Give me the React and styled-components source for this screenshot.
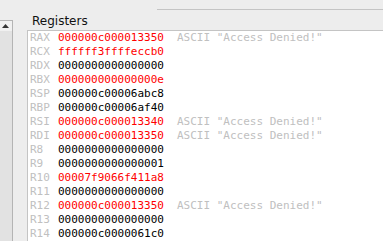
import React from "react";
import styled, { createGlobalStyle } from "styled-components";

const Global = createGlobalStyle`
  html, body { margin: 0; padding: 0; background: #ededed; }
  body { width: 383px; height: 241px; overflow: hidden; }
`;

const Window = styled.div`
  display: flex;
  flex-direction: row;
  width: 383px;
  height: 241px;
  overflow: hidden;
  background: #ededed;
`;

const ScrollCol = styled.div`
  width: 13px;
  padding-top: 20px;
  box-sizing: border-box;
  display: flex;
  flex-direction: column;
  flex: none;
`;

const Scrollbar = styled.div`
  flex: 1;
  display: flex;
  flex-direction: column;
  border-top: 1px solid #b4b4b4;
  border-right: 1px solid #b4b4b4;
`;

const ArrowButton = styled.div`
  height: 10px;
  background: #f0f0f0;
  display: flex;
  align-items: center;
  justify-content: center;
  padding-right: 1px;
`;

const Track = styled.div`
  flex: 1;
  background: #e2e2e2;
`;

const Main = styled.div`
  flex: 1;
  margin-left: 14px;
  display: flex;
  flex-direction: column;
  min-width: 0;
`;

const TopRule = styled.div`
  height: 9px;
  margin-left: ${(p) => p.$start}px;
  border-bottom: 1px solid #c4c4c4;
`;

const Title = styled.div`
  font-family: "DejaVu Sans", sans-serif;
  font-size: 12px;
  line-height: 14px;
  color: #111;
  padding: 4px 0 2px 5px;
`;

const Panel = styled.div`
  flex: 1;
  background: #ffffff;
  border-left: 1px solid #c4c4c4;
  border-top: 1px solid #c4c4c4;
  padding-left: 2px;
  font-family: "DejaVu Sans Mono", monospace;
  font-size: 11px;
  line-height: 14px;
  white-space: pre;
`;

const Row = styled.div`
  display: flex;
  height: 14px;
`;

const Name = styled.span`
  width: 28px;
  flex: none;
  color: #c0c0c0;
`;

const Value = styled.span`
  width: 119px;
  flex: none;
  color: ${(p) => (p.$changed ? "#ff0000" : "#000000")};
`;

const Comment = styled.span`
  color: #c0c0c0;
`;

const ASCII = 'ASCII "Access Denied!"';

const regs = [
  ["RAX", "000000c000013350", true, ASCII],
  ["RCX", "ffffff3ffffeccb0", true],
  ["RDX", "0000000000000000", false],
  ["RBX", "000000000000000e", true],
  ["RSP", "000000c00006abc8", false],
  ["RBP", "000000c00006af40", false],
  ["RSI", "000000c000013340", true, ASCII],
  ["RDI", "000000c000013350", true, ASCII],
  ["R8", "0000000000000000", false],
  ["R9", "0000000000000001", false],
  ["R10", "00007f9066f411a8", true],
  ["R11", "0000000000000000", false],
  ["R12", "000000c000013350", true, ASCII],
  ["R13", "0000000000000000", false],
  ["R14", "000000c0000061c0", false],
];

export default function App() {
  return (
    <>
      <Global />
      <Window>
        <ScrollCol>
          <Scrollbar>
            <ArrowButton>
              <svg width="7" height="4" viewBox="0 0 7 4">
                <polygon points="0,4 7,4 3.5,0" fill="#333" />
              </svg>
            </ArrowButton>
            <Track />
          </Scrollbar>
        </ScrollCol>
        <Main>
          <TopRule $start={130} />
          <Title>Registers</Title>
          <Panel>
            {regs.map(([n, v, c, cm]) => (
              <Row key={n}>
                <Name>{n}</Name>
                <Value $changed={c}>{v}</Value>
                {cm && <Comment>{cm}</Comment>}
              </Row>
            ))}
          </Panel>
        </Main>
      </Window>
    </>
  );
}
